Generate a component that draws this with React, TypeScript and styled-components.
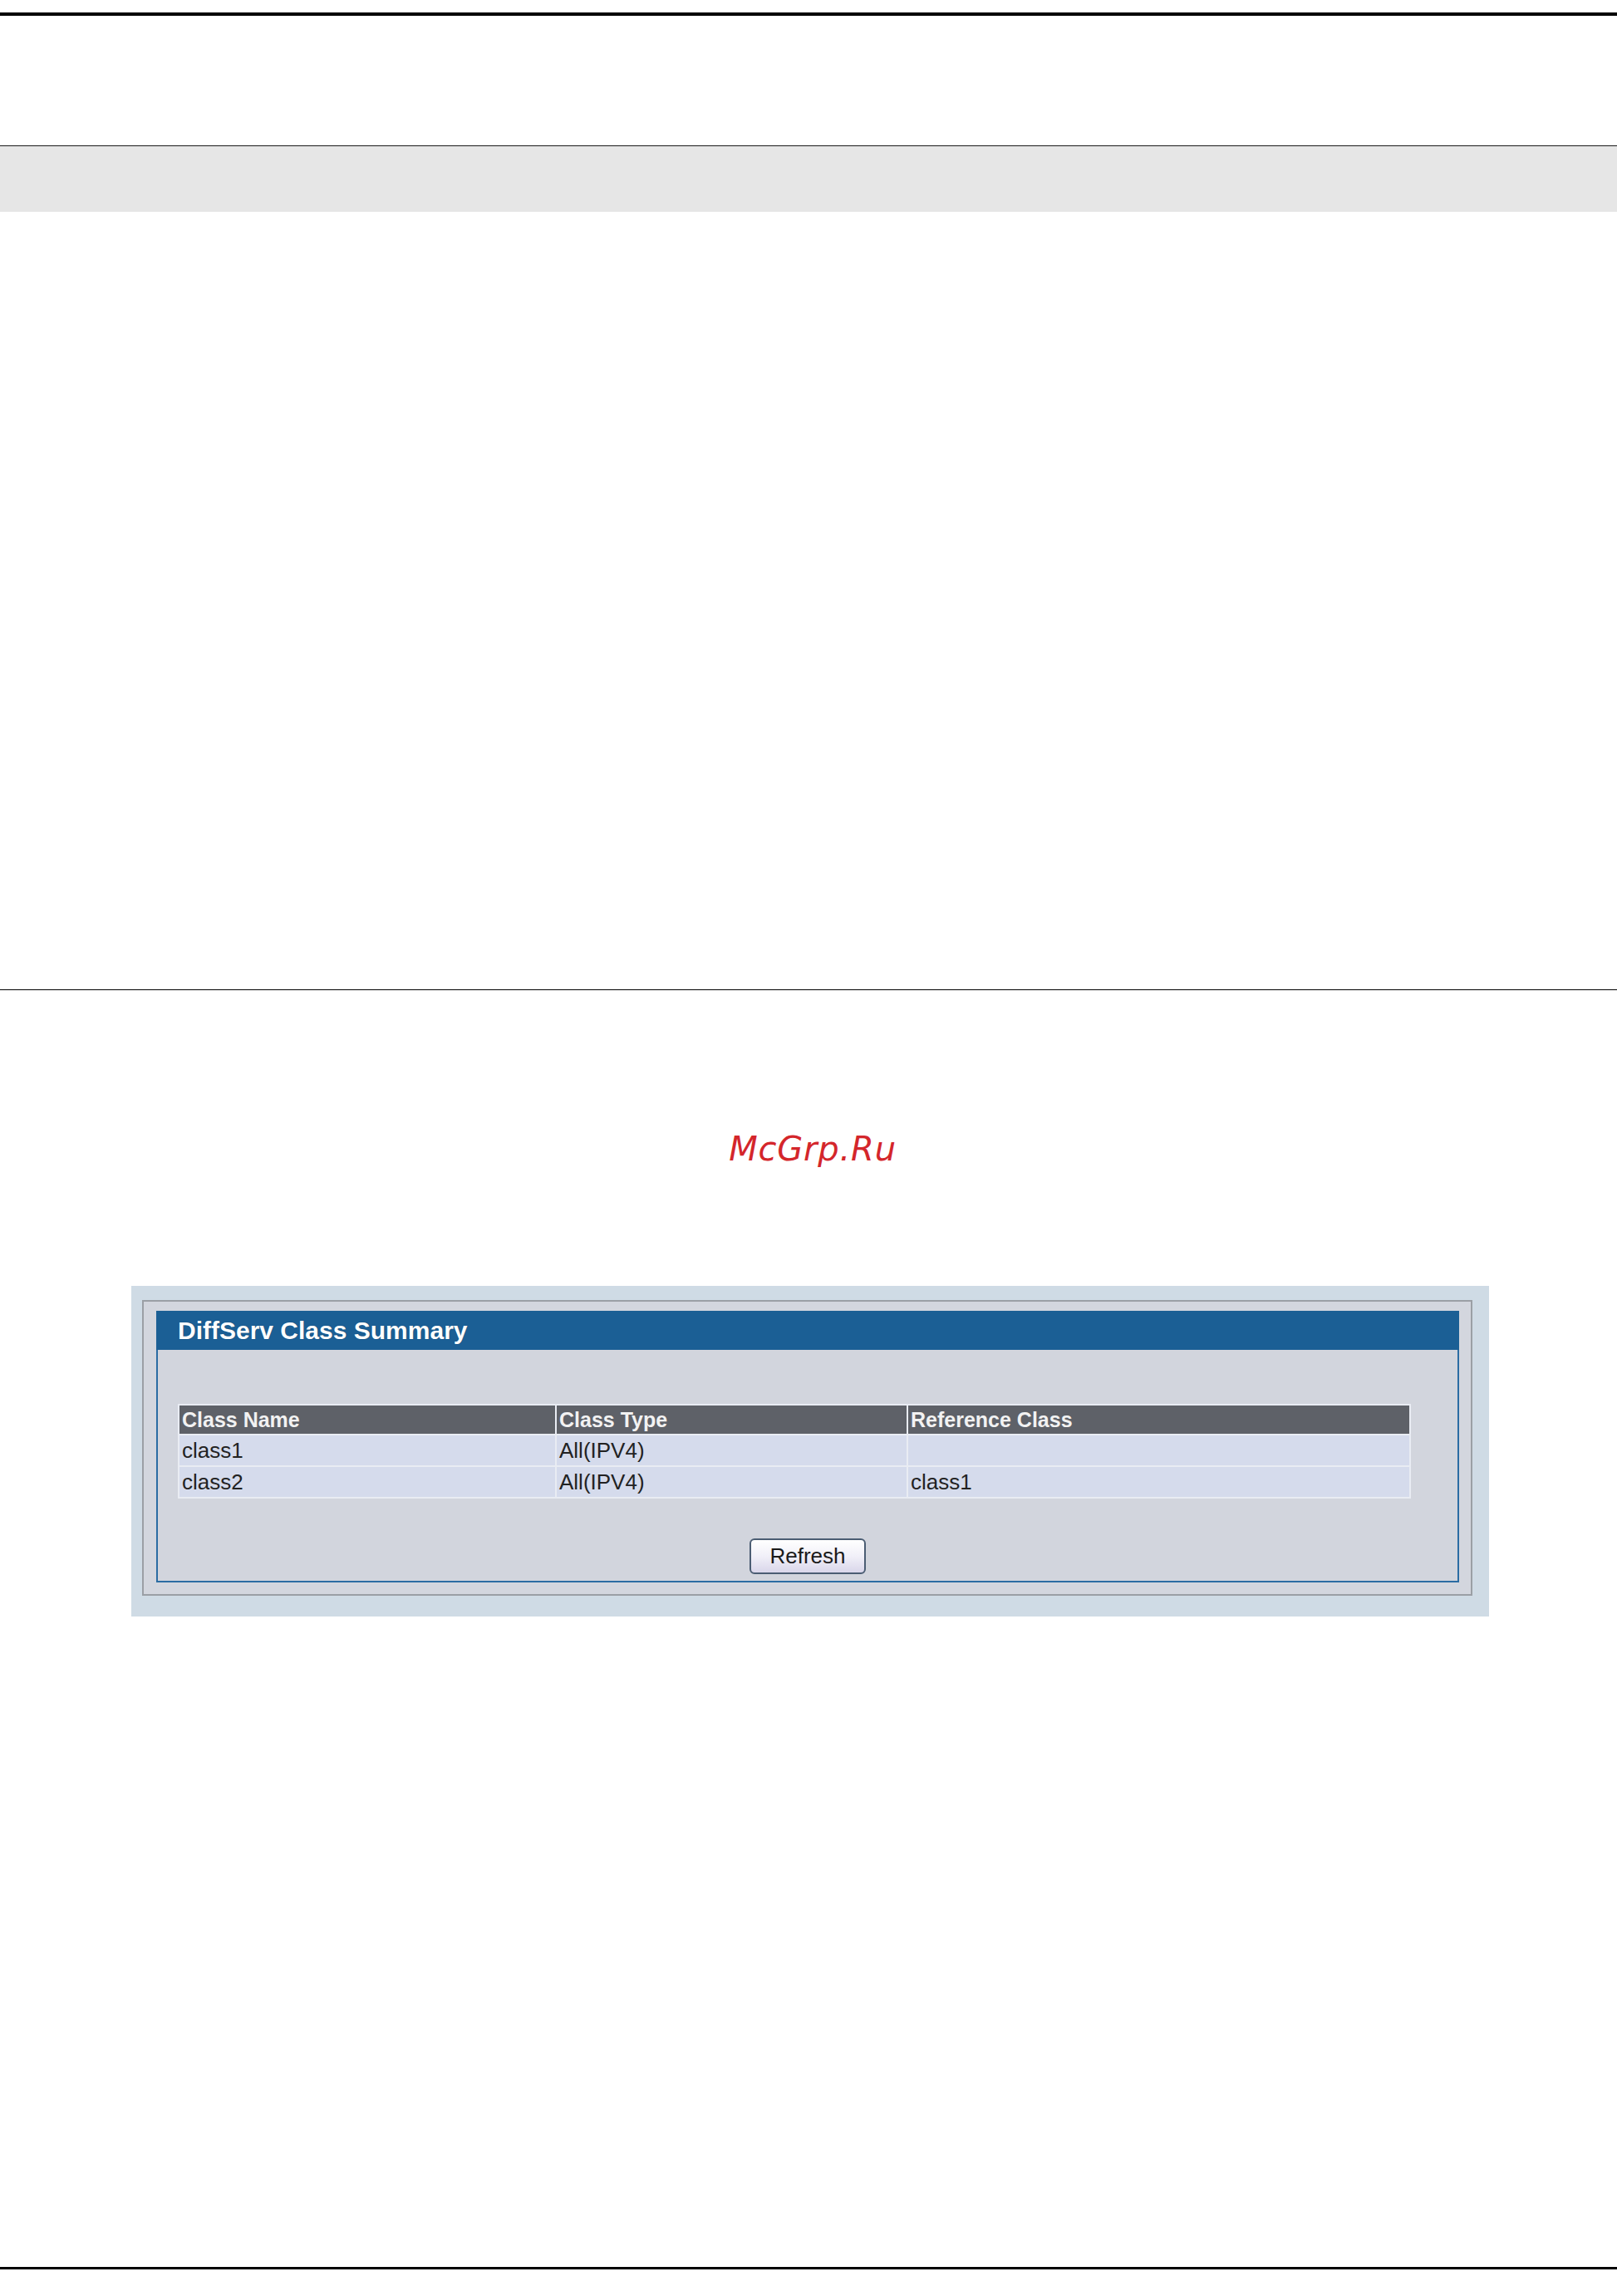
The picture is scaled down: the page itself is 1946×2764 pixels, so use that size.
import React from 'react'
import styled, { createGlobalStyle } from 'styled-components'

const GlobalStyle = createGlobalStyle`
  html, body {
    margin: 0;
    padding: 0;
    background: #ffffff;
  }
  body {
    font-family: "Liberation Sans", Arial, sans-serif;
  }
`

const Page = styled.div`
  width: 1946px;
  min-height: 2764px;
  display: flex;
  flex-direction: column;
  background: #ffffff;
`

const Rule = styled.div<{ $thick: number; $top: number }>`
  height: ${(p) => p.$thick}px;
  margin-top: ${(p) => p.$top}px;
  background: #000000;
`

const Band = styled.div`
  margin-top: 156px;
  height: 79px;
  border-top: 1px solid #1a1a1a;
  background: #e6e6e6;
`

const Watermark = styled.div`
  margin-top: 167px;
  padding-left: 10px;
  text-align: center;
  font-family: "DejaVu Sans", sans-serif;
  font-style: italic;
  font-size: 40px;
  line-height: 48px;
  letter-spacing: 0.8px;
  color: #d4262b;
`

const Shot = styled.div`
  margin: 141px 0 0 158px;
  width: 1634px;
  box-sizing: border-box;
  padding: 17px 20px 25px 13px;
  background: #cfdbe5;
`

const Frame = styled.div`
  border: 2px solid #9b9fa5;
  background: #d3d6de;
  padding: 11px 14px 14px 15px;
`

const Panel = styled.div`
  border: 2px solid #2b6ca3;
  border-top: none;
  background: #d2d5dd;
  display: flex;
  flex-direction: column;
  padding-bottom: 8px;
`

const PanelHeader = styled.div`
  height: 47px;
  margin: 0 -2px;
  background: #1b5f95;
  display: flex;
  align-items: center;
  padding-left: 26px;
  font-weight: bold;
  font-size: 30px;
  color: #ffffff;
  text-shadow: 0 0 1px #0c3a60;
`

const Body = styled.div`
  display: flex;
  flex-direction: column;
  padding-top: 65px;
`

const Grid = styled.table`
  align-self: flex-start;
  margin-left: 24px;
  width: 1484px;
  border-collapse: separate;
  border-spacing: 2px;
  background: #e9ecf3;
  table-layout: fixed;
`

const HeadCell = styled.th<{ $w: number }>`
  width: ${(p) => p.$w}px;
  height: 34px;
  padding: 0 3px;
  background: #5e6168;
  color: #f2f2f2;
  font-size: 25px;
  font-weight: bold;
  text-align: left;
  line-height: 34px;
  white-space: nowrap;
`

const Cell = styled.td`
  height: 36px;
  padding: 0 3px;
  background: #d5dbec;
  color: #222222;
  font-size: 26px;
  line-height: 36px;
  white-space: nowrap;
`

const Actions = styled.div`
  display: flex;
  justify-content: center;
  margin-top: 48px;
`

const Button = styled.button`
  width: 140px;
  height: 43px;
  border: 2px solid #4b5d73;
  border-radius: 6px;
  background: linear-gradient(#ffffff 0%, #f1f0f8 50%, #d9d6ea 100%);
  font-family: "Liberation Sans", Arial, sans-serif;
  font-size: 26px;
  color: #1a1a1a;
  padding: 0;
`

const rows = [
  { name: 'class1', type: 'All(IPV4)', ref: '' },
  { name: 'class2', type: 'All(IPV4)', ref: 'class1' },
]

const App: React.FC = () => {
  return (
    <Page>
      <GlobalStyle />
      <Rule $thick={4} $top={15} />
      <Band />
      <Rule $thick={1} $top={936} />
      <Watermark>McGrp.Ru</Watermark>
      <Shot>
        <Frame>
          <Panel>
            <PanelHeader>DiffServ Class Summary</PanelHeader>
            <Body>
              <Grid>
                <thead>
                  <tr>
                    <HeadCell $w={446}>Class Name</HeadCell>
                    <HeadCell $w={415}>Class Type</HeadCell>
                    <HeadCell $w={597}>Reference Class</HeadCell>
                  </tr>
                </thead>
                <tbody>
                  {rows.map((r) => (
                    <tr key={r.name}>
                      <Cell>{r.name}</Cell>
                      <Cell>{r.type}</Cell>
                      <Cell>{r.ref}</Cell>
                    </tr>
                  ))}
                </tbody>
              </Grid>
              <Actions>
                <Button>Refresh</Button>
              </Actions>
            </Body>
          </Panel>
        </Frame>
      </Shot>
      <Rule $thick={3} $top={783} />
    </Page>
  )
}

export default App
